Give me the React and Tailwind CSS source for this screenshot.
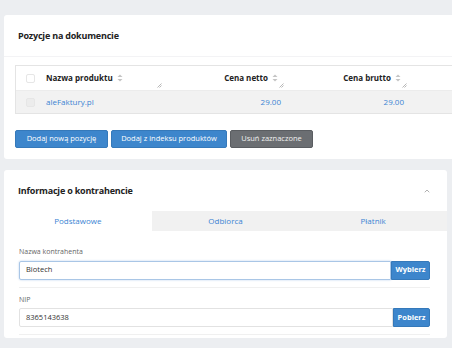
import { ChevronUp } from 'lucide-react'

function SortIcon() {
  return (
    <svg width="6" height="8" viewBox="0 0 6 8" className="ml-[4px] inline-block">
      <path d="M3 0.5 L5.5 3 L0.5 3 Z" fill="#c4c4c4" />
      <path d="M3 7.5 L5.5 5 L0.5 5 Z" fill="#c4c4c4" />
    </svg>
  )
}

function Grip() {
  return (
    <svg width="5" height="5" viewBox="0 0 5 5" className="absolute right-[2px] bottom-[2px]">
      <path d="M4.5 0.5 L0.5 4.5 M4.5 2.5 L2.5 4.5" stroke="#9a9a9a" strokeWidth="0.7" />
    </svg>
  )
}

function Checkbox({ filled }) {
  return (
    <div className={`w-[9px] h-[9px] rounded-[2px] border border-[#e6e6e6] ${filled ? 'bg-[#ececec]' : 'bg-white'}`} />
  )
}

function App() {
  return (
    <div
      className="w-[452px] h-[348px] overflow-hidden bg-[#eceef1] pt-[15px] text-[#222]"
      style={{ fontFamily: '"Open Sans", "Noto Sans", sans-serif' }}
    >
      {/* Pozycje na dokumencie */}
      <div className="ml-[4px] w-[560px] bg-white rounded-[3px]">
        <div className="h-[42px] flex items-center pl-[14px] border-b border-[#f3f3f5]">
          <h2 className="text-[9px] font-bold tracking-[-0.2px]">Pozycje na dokumencie</h2>
        </div>
        <div className="px-[11px] pt-[8px] pb-[11px]">
          <div className="border border-[#e4e4e4] w-[560px]">
            <div className="flex h-[24px] items-center text-[8px] font-bold">
              <div className="w-[25px] flex justify-end pr-[6px]"><Checkbox /></div>
              <div className="relative w-[123px] h-full flex items-center pl-[5px]">
                Nazwa produktu <SortIcon />
                <Grip />
              </div>
              <div className="relative w-[122px] h-full flex items-center justify-end pr-[8px]">
                Cena netto <SortIcon />
                <Grip />
              </div>
              <div className="relative w-[123px] h-full flex items-center justify-end pr-[8px]">
                Cena brutto <SortIcon />
                <Grip />
              </div>
            </div>
            <div className="flex h-[23px] items-center bg-[#f2f2f2] text-[8px] text-[#3b84d3] border-t border-[#ececec]">
              <div className="w-[25px] flex justify-end pr-[6px]"><Checkbox filled /></div>
              <div className="w-[123px] pl-[5px]">aleFaktury.pl</div>
              <div className="w-[122px] text-right pr-[5px]">29.00</div>
              <div className="w-[123px] text-right pr-[5px]">29.00</div>
            </div>
          </div>
          <div className="flex gap-[3px] mt-[16px] text-[7.5px] text-white">
            <button className="h-[18px] w-[93px] bg-[#3d86cc] border border-[#3579ba] rounded-[2px]">Dodaj nową pozycję</button>
            <button className="h-[18px] w-[116px] bg-[#3d86cc] border border-[#3579ba] rounded-[2px]">Dodaj z indeksu produktów</button>
            <button className="h-[18px] w-[83px] bg-[#6b6e72] border border-[#5a5d61] rounded-[2px] text-[#f0f0f0]">Usuń zaznaczone</button>
          </div>
        </div>
      </div>

      {/* Informacje o kontrahencie */}
      <div className="ml-[4px] mt-[11px] w-[443px] bg-white rounded-[3px]">
        <div className="h-[41px] flex items-center justify-between pl-[14px] pr-[16px]">
          <h2 className="text-[9px] font-bold tracking-[-0.2px]">Informacje o kontrahencie</h2>
          <ChevronUp size={8} strokeWidth={2} className="text-[#888]" />
        </div>
        <div className="grid grid-cols-3 h-[20px] text-[8px] text-[#3b84d3]">
          <div className="flex items-center justify-center bg-white">Podstawowe</div>
          <div className="flex items-center justify-center bg-[#f1f1f1]">Odbiorca</div>
          <div className="flex items-center justify-center bg-[#f1f1f1]">Płatnik</div>
        </div>
        <div className="pl-[15px] pr-[17px] pt-[16px] pb-[3px]">
          <div className="border-b border-[#f0f0f0] pb-[7px]">
            <label className="block text-[7px] text-[#666] mb-[3px]">Nazwa kontrahenta</label>
            <div className="flex h-[19px]">
              <div className="flex-1 flex items-center pl-[6px] text-[7.5px] text-[#333] border border-[#a9c6e6] rounded-l-[2px] shadow-[0_0_2px_rgba(80,140,210,0.45)]">Biotech</div>
              <button className="w-[39px] bg-[#3d86cc] border border-[#3579ba] text-white text-[7.5px] font-bold rounded-r-[2px]">Wybierz</button>
            </div>
          </div>
          <div className="border-b border-[#f0f0f0] pt-[7px] pb-[7px]">
            <label className="block text-[7px] text-[#666] mb-[3px]">NIP</label>
            <div className="flex h-[19px]">
              <div className="flex-1 flex items-center pl-[6px] text-[7.5px] text-[#333] border border-[#e2e2e2] rounded-l-[2px]">8365143638</div>
              <button className="w-[37px] bg-[#3d86cc] border border-[#3579ba] text-white text-[7.5px] font-bold rounded-r-[2px]">Pobierz</button>
            </div>
          </div>
        </div>
      </div>
    </div>
  )
}

export default App
